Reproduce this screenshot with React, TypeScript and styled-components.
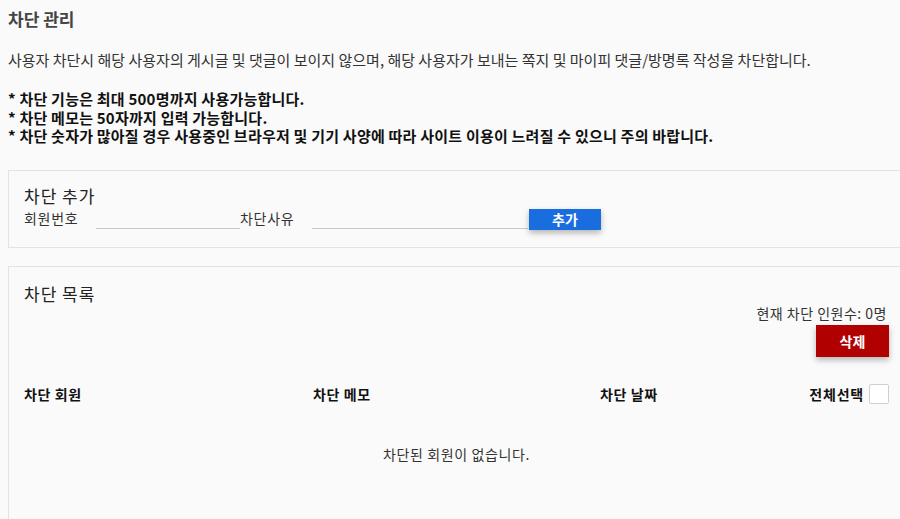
import React from "react";
import styled, { createGlobalStyle } from "styled-components";

const GlobalStyle = createGlobalStyle`
  html {
    overflow: hidden;
  }
  body {
    margin: 8px 0 8px 8px;
    background: #fafafa;
    font-family: "Noto Sans CJK KR", "Noto Sans", sans-serif;
    color: #333;
  }
`;

const Page = styled.div`
  display: flex;
  flex-direction: column;
`;

const PageTitle = styled.h2`
  margin: 0;
  font-size: 17px;
  line-height: 22px;
  font-weight: 700;
  color: #444;
`;

const Description = styled.p`
  margin: 20px 0 0;
  font-size: 15px;
  line-height: 20px;
  color: #333;
`;

const Notes = styled.ul`
  margin: 20px 0 0;
  padding: 0;
  list-style: none;
`;

const Note = styled.li`
  font-size: 15px;
  line-height: 18.5px;
  font-weight: 700;
  color: #111;
  letter-spacing: 0.22px;
  &::before {
    content: "* ";
  }
`;

const Box = styled.section<{ $top: number; $grow?: boolean }>`
  margin-top: ${(p) => p.$top}px;
  border: 1px solid #e3e3e3;
  border-right: none;
  padding: 0 11px 0 15px;
  display: flex;
  flex-direction: column;
  min-height: ${(p) => (p.$grow ? "400px" : "auto")};
`;

const BoxTitle = styled.h3<{ $top: number }>`
  margin: ${(p) => p.$top}px 0 0;
  font-size: 17px;
  line-height: 22px;
  font-weight: 400;
  letter-spacing: 1px;
  color: #222;
`;

const AddRow = styled.div`
  display: grid;
  grid-template-columns: 72px 144px 72px 216px 72px;
  align-items: start;
  margin-bottom: 17px;
`;

const Label = styled.label`
  font-size: 14px;
  line-height: 22px;
  letter-spacing: 0.7px;
  color: #333;
`;

const LineInput = styled.input`
  box-sizing: border-box;
  height: 22px;
  width: 100%;
  border: none;
  border-bottom: 1px solid #c8c8c8;
  background: transparent;
  outline: none;
  padding: 0;
  font: inherit;
`;

const ActionButton = styled.button<{ $color: string; $w: number; $h: number }>`
  box-sizing: border-box;
  width: ${(p) => p.$w}px;
  height: ${(p) => p.$h}px;
  border: none;
  border-radius: 0;
  background: ${(p) => p.$color};
  color: #fff;
  font-family: inherit;
  font-size: 14px;
  font-weight: 700;
  padding: 0;
  box-shadow: 0 3px 6px rgba(0, 0, 0, 0.28);
  cursor: pointer;
`;

const AddButton = styled(ActionButton)`
  margin-top: 2px;
  margin-left: 1px;
`;

const CountLine = styled.div`
  align-self: flex-end;
  font-size: 14px;
  line-height: 16px;
  letter-spacing: 0.5px;
  color: #333;
  margin-right: 2px;
`;

const DeleteWrap = styled.div`
  display: flex;
  justify-content: flex-end;
  margin-top: 4px;
`;

const HeaderRow = styled.div`
  display: grid;
  grid-template-columns: 289px 287px 1fr auto;
  align-items: center;
  margin-top: 26px;
  padding-top: 1px;
`;

const HeaderCell = styled.div`
  font-size: 14px;
  line-height: 20px;
  font-weight: 700;
  letter-spacing: 0.6px;
  color: #111;
`;

const SelectAll = styled.label`
  display: flex;
  align-items: center;
  gap: 5px;
  font-size: 14px;
  line-height: 20px;
  font-weight: 700;
  letter-spacing: 0.8px;
  color: #111;
`;

const CheckBox = styled.span`
  box-sizing: border-box;
  width: 20px;
  height: 20px;
  border: 1px solid #cfcfcf;
  border-radius: 2px;
  background: #fff;
`;

const Empty = styled.div`
  margin-top: 40px;
  text-align: center;
  font-size: 14px;
  line-height: 20px;
  letter-spacing: 0.6px;
  color: #333;
`;

export default function App() {
  return (
    <>
      <GlobalStyle />
      <Page>
        <PageTitle>차단 관리</PageTitle>
        <Description>
          사용자 차단시 해당 사용자의 게시글 및 댓글이 보이지 않으며, 해당 사용자가 보내는 쪽지 및 마이피 댓글/방명록 작성을 차단합니다.
        </Description>
        <Notes>
          <Note>차단 기능은 최대 500명까지 사용가능합니다.</Note>
          <Note>차단 메모는 50자까지 입력 가능합니다.</Note>
          <Note>차단 숫자가 많아질 경우 사용중인 브라우저 및 기기 사양에 따라 사이트 이용이 느려질 수 있으니 주의 바랍니다.</Note>
        </Notes>

        <Box $top={24}>
          <BoxTitle $top={14}>차단 추가</BoxTitle>
          <AddRow>
            <Label>회원번호</Label>
            <LineInput />
            <Label>차단사유</Label>
            <LineInput />
            <AddButton $color="#1a6ddf" $w={72} $h={21}>추가</AddButton>
          </AddRow>
        </Box>

        <Box $top={18} $grow>
          <BoxTitle $top={16}>차단 목록</BoxTitle>
          <CountLine>현재 차단 인원수: 0명</CountLine>
          <DeleteWrap>
            <ActionButton $color="#b10000" $w={73} $h={32}>삭제</ActionButton>
          </DeleteWrap>
          <HeaderRow>
            <HeaderCell>차단 회원</HeaderCell>
            <HeaderCell>차단 메모</HeaderCell>
            <HeaderCell>차단 날짜</HeaderCell>
            <SelectAll>
              전체선택
              <CheckBox />
            </SelectAll>
          </HeaderRow>
          <Empty>차단된 회원이 없습니다.</Empty>
        </Box>
      </Page>
    </>
  );
}
